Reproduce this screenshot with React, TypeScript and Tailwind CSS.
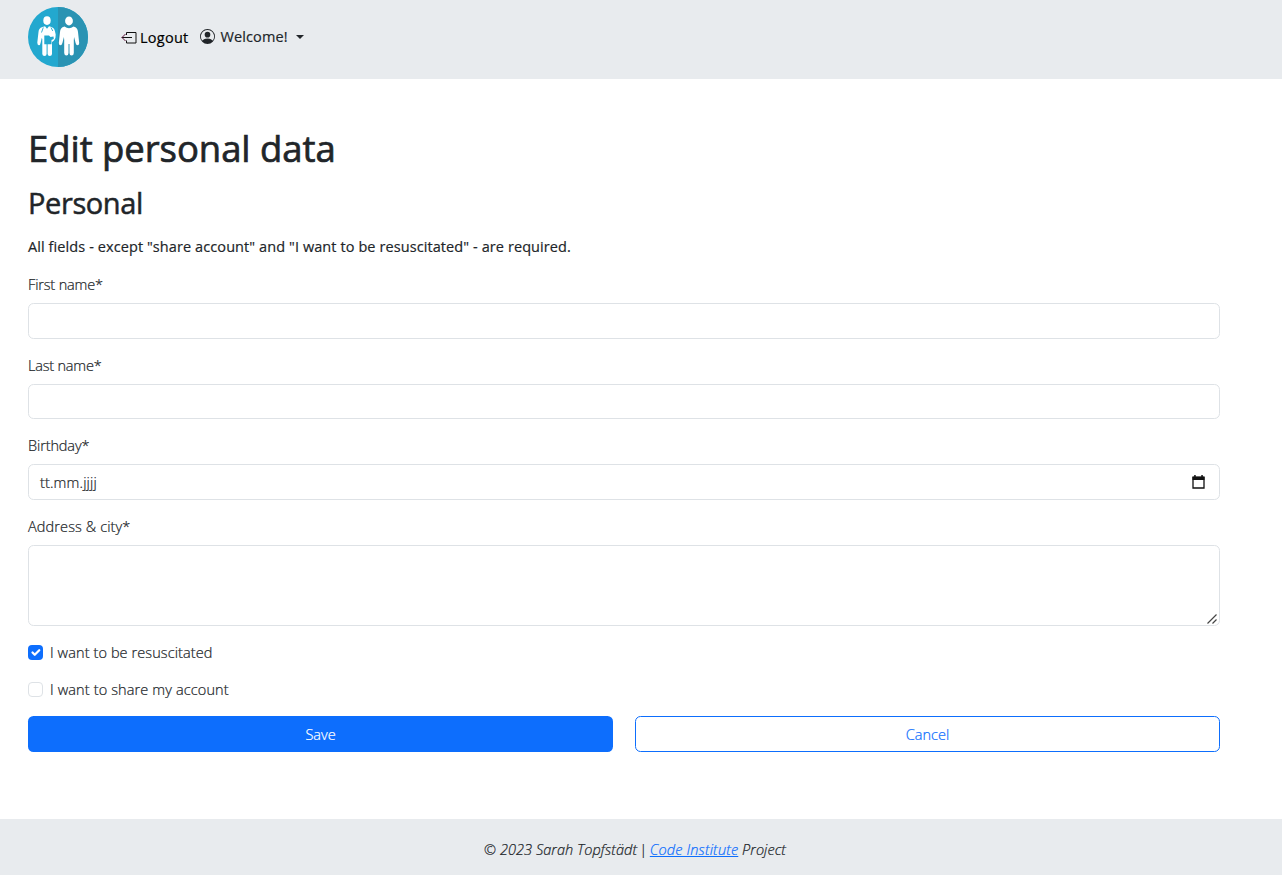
import type { ReactNode } from "react";
import { BsPersonCircle } from "react-icons/bs";

function Logo() {
  return (
    <svg viewBox="0 0 60 60" className="block h-[60px] w-[60px]" role="img">
      <circle cx="30" cy="30" r="30" fill="#23a8cf" />
      <path d="M30 0a30 30 0 0 1 0 60z" fill="#2a93b3" />
      <g fill="#fff">
        <ellipse cx="19" cy="13.600" rx="3.700" ry="4.300" />
        <path d="M14.500 20C11.500 21 10.800 22.500 10.500 25L9.300 35.500q0 2.500 1.500 2.700t1.900-2.700l1-4.500.6 1v15q.2 2 2.200 2t2.100-2V37h1v10q.2 2 2.200 2t2.200-2V35l2-1.500q2-2 1.700-6L27 24.500c-.5-2.500-1.600-3.700-3.500-4.500l-2.500-.7-2 2.500-2-2.500z" />
        <ellipse cx="41" cy="13.900" rx="3.900" ry="4.500" />
        <path d="M36.500 19.500q4.500 3.500 9 0c3.200.8 4.200 2.500 4.500 5.500l1.200 11q-.1 2.300-1.600 2.300t-2-2.300l-1.500-6-.3 3V46q-.1 2.500-2.200 2.500T41.500 46v-9h-1v9q-.1 2.500-2.100 2.500T36.200 46V33l-.3-3-1.500 6q-.5 2.300-2 2.300t-1.600-2.300l1.200-11c.3-3 1.300-4.700 4.500-5.500z" />
      </g>
      <path d="M16.300 28.500h4.700l1.500 1.500 3-.5.300 2.500-2.300 1v4.300h-7.200z" fill="#23a8cf" />
      <path d="M15.300 20.500l-1.800 5M23 20.500l1.800 3.500" stroke="#23a8cf" strokeWidth=".9" fill="none" />
    </svg>
  );
}

function LogoutIcon() {
  return (
    <svg viewBox="0 0 16 14" className="mr-[3px] h-[14px] w-[16px]" fill="none" stroke="#111" strokeWidth="1">
      <path d="M5.500 4V1.500h9.500v10.500H5.500V9.500" />
      <path d="M11 6.500H.8" />
      <path d="M4.500 3 1 6.500 4.500 10" stroke="#5c1038" />
    </svg>
  );
}

function Field({ label, className, children }: { label: ReactNode; className: string; children?: ReactNode }) {
  return (
    <div className="mb-[15px]">
      <div className="mb-[7px] h-[23px] text-[14.5px] leading-[23px]">{label}</div>
      <div className={"flex rounded-[5.5px] border border-[#dee2e6] bg-white " + className}>{children}</div>
    </div>
  );
}

function CalendarIcon() {
  return (
    <svg viewBox="0 0 13 14" className="h-[14px] w-[13px]">
      <path d="M1 2.500h11v10.500H1z" fill="none" stroke="#111" strokeWidth="1.300" />
      <path d="M.5 1.500h12V5H.5zM2.200 0h1.500v2H2.200zM9.300 0h1.500v2H9.300z" fill="#111" />
    </svg>
  );
}

export default function App() {
  return (
    <div className="flex h-[875px] w-[1282px] flex-col overflow-hidden bg-white font-['Open_Sans','Noto_Sans',sans-serif] font-light text-[#212529] [-webkit-text-stroke:0.22px]">
      <header className="flex h-[79px] shrink-0 items-start bg-[#e8ebee] pl-[28px] pt-[7px] font-normal [-webkit-text-stroke:0.18px]">
        <Logo />
        <a className="ml-[33px] mt-[19px] flex h-[23px] items-center text-[14.5px] leading-[23px] tracking-[0.25px] text-black">
          <LogoutIcon />
          <span>Logout</span>
        </a>
        <a className="ml-[12px] mt-[18px] flex h-[23px] items-center text-[14.5px] leading-[23px] tracking-[0.13px]">
          <BsPersonCircle className="mr-[5px] h-[15px] w-[15px]" />
          <span>Welcome!</span>
          <span className="ml-[8px] border-x-4 border-t-4 border-x-transparent border-t-[#212529]" />
        </a>
      </header>

      <main className="flex h-[740px] shrink-0 flex-col pl-[28px] pr-[62px] pt-[46px]">
        <h1 className="h-[46px] text-[36.500px] font-normal leading-[46px] tracking-[-0.06px] [-webkit-text-stroke:0.7px]">Edit personal data</h1>
        <h2 className="mt-[13px] h-[37px] text-[29px] font-normal leading-[37px] tracking-[-0.4px] [-webkit-text-stroke:0.5px]">Personal</h2>
        <p className="mt-[14px] h-[23px] text-[14.500px] font-normal leading-[23px] tracking-[0.09px] [-webkit-text-stroke:0.18px]">
          All fields - except "share account" and "I want to be resuscitated" - are required.
        </p>
        <div className="mt-[15px]">
          <Field label={<span className="tracking-[-0.15px]">First name*</span>} className="h-[36px]" />
          <Field label={<span className="tracking-[-0.2px]">Last name*</span>} className="h-[35px]" />
          <Field label={<span className="tracking-[-0.12px]">Birthday*</span>} className="h-[36px] items-center justify-between pl-[11px] pr-[14px]">
            <span className="pt-px text-[14.500px] tracking-[0.15px]">tt.mm.jjjj</span>
            <CalendarIcon />
          </Field>
          <Field label={<span className="tracking-[0.12px]">Address & city*</span>} className="h-[81px] items-end justify-end p-[2px] pb-px">
            <svg viewBox="0 0 10 10" className="h-[10px] w-[10px]" stroke="#444" strokeWidth="1.200">
              <path d="M.5 9.500L9.500.5M5.500 9.500l4-4" />
            </svg>
          </Field>
        </div>
        <div className="flex h-[23px] items-center text-[14.500px] tracking-[0.1px]">
          <span className="mr-[7px] flex h-[15px] w-[15px] items-center justify-center rounded-[4px] bg-[#0d6efd]">
            <svg viewBox="0 0 20 20" className="h-[15px] w-[15px]" fill="none" stroke="#fff" strokeWidth="3" strokeLinecap="round" strokeLinejoin="round">
              <path d="m6 10 3 3 6-6" />
            </svg>
          </span>
          <span>I want to be resuscitated</span>
        </div>
        <div className="mt-[14px] flex h-[23px] items-center text-[14.500px] tracking-[0.13px]">
          <span className="mr-[7px] h-[15px] w-[15px] rounded-[4px] border border-[#dee2e6]" />
          <span>I want to share my account</span>
        </div>
        <div className="mt-[15px] grid grid-cols-2 gap-[22px] text-[14.500px]">
          <button className="h-[36px] rounded-[5.500px] bg-[#0d6efd] pt-px text-white">Save</button>
          <button className="h-[36px] rounded-[5.500px] border border-[#0d6efd] pt-px text-[#0d6efd]">Cancel</button>
        </div>
      </main>

      <footer className="flex h-[56px] shrink-0 justify-center bg-[#e8ebee] pr-[12px] pt-[19px] text-[14.500px] italic leading-[23px] tracking-[0.06px]">
        <p>
          © 2023 Sarah Topfstädt <span className="-ml-[2px] mr-[0.5px] tracking-[-0.6px]">| </span>
          <a className="tracking-[0.15px] text-[#0d6efd] underline">Code Institute</a> Project
        </p>
      </footer>
    </div>
  );
}
